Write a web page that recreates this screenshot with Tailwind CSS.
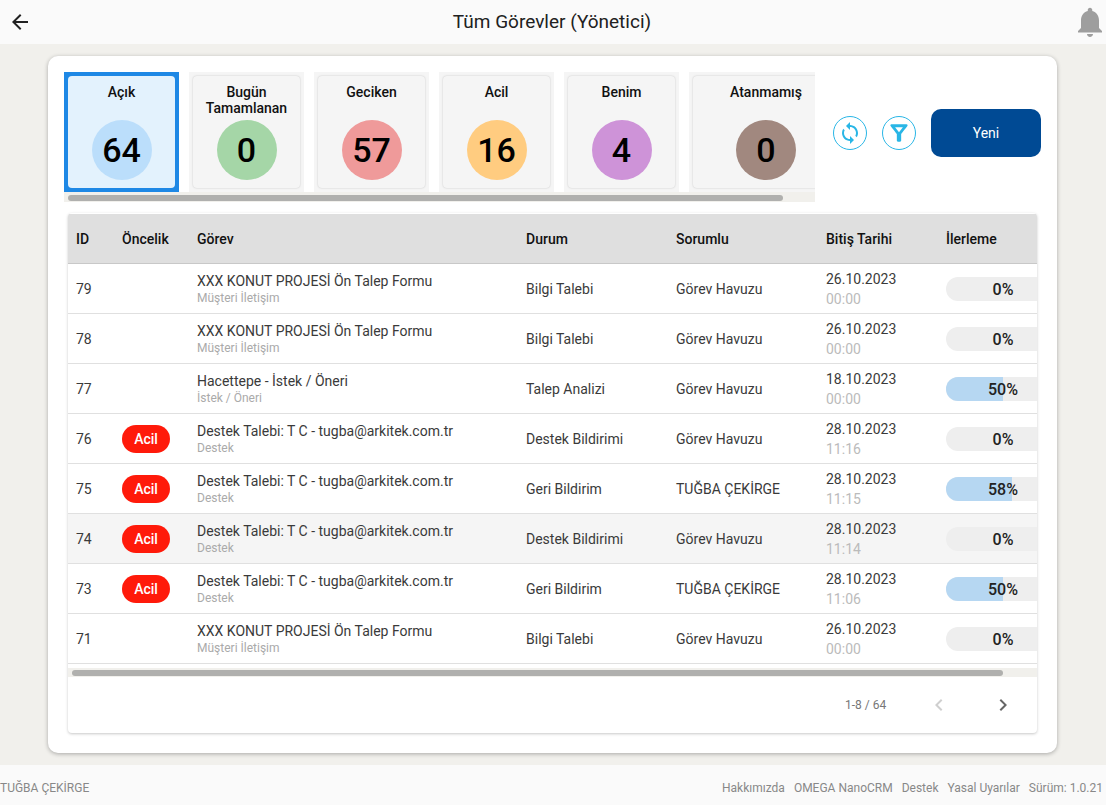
<!DOCTYPE html>
<html lang="en">

<head>
    <meta charset="UTF-8" />
    <meta name="viewport" content="width=device-width, initial-scale=1.0" />
    <title>Tüm Görevler (Yönetici)</title>
    <script src="https://cdn.jsdelivr.net/npm/@tailwindcss/browser@4"></script>
</head>

<body class="bg-[#f1f0ec] font-['Roboto',sans-serif] text-[#3a3a3a] h-[805px] w-[1106px] overflow-hidden flex flex-col">
    <!-- Top bar -->
    <header class="h-[44px] shrink-0 bg-[#fafafa] flex items-center justify-between pl-2 overflow-hidden relative">
        <svg class="w-6 h-6 fill-[#212121]" viewBox="0 0 24 24"><path d="M20 11H7.83l5.59-5.59L12 4l-8 8 8 8 1.41-1.41L7.83 13H20v-2z" /></svg>
        <h1 class="absolute inset-x-0 pr-[2px] text-center text-[19px] leading-[44px] text-[#212121]">Tüm Görevler (Yönetici)</h1>
        <svg class="w-9 h-9 fill-[#9e9e9e] -mr-[2px] shrink-0" viewBox="0 0 24 24"><path d="M12 22c1.1 0 2-.9 2-2h-4c0 1.1.89 2 2 2zm6-6v-5c0-3.07-1.64-5.64-4.5-6.32V4c0-.83-.67-1.5-1.5-1.5s-1.5.67-1.5 1.5v.68C7.63 5.36 6 7.92 6 11v5l-2 2v1h16v-1l-2-2z" /></svg>
    </header>

    <main class="flex-1 pt-3 pl-12">
        <div class="w-[1009px] h-[697px] bg-white rounded-[10px] shadow-[0_1px_4px_rgba(0,0,0,0.3)] pt-4 pl-4">
            <!-- Summary tiles -->
            <div class="flex items-start">
                <div class="w-[751px] overflow-hidden">
                    <div id="tiles" class="flex gap-[10px] h-[120px]"></div>
                    <div class="h-[10px] bg-[#f1f0ec] pt-[3px] pl-1 pr-8">
                        <div class="w-[715px] h-[6px] rounded-full bg-[#b0b0ae]"></div>
                    </div>
                </div>
                <div class="flex items-center mt-[37px] ml-[18px]">
                    <button class="w-[34px] h-[34px] rounded-full border border-[#29b6e6] flex items-center justify-center">
                        <svg class="w-6 h-6 fill-[#29b6e6]" viewBox="0 0 24 24"><path d="M12 4V1L8 5l4 4V6c3.31 0 6 2.69 6 6 0 1.01-.25 1.97-.7 2.8l1.46 1.46C19.54 15.03 20 13.57 20 12c0-4.42-3.58-8-8-8zm0 14c-3.31 0-6-2.69-6-6 0-1.01.25-1.97.7-2.8L5.24 7.74C4.46 8.97 4 10.43 4 12c0 4.42 3.58 8 8 8v3l4-4-4-4v3z" /></svg>
                    </button>
                    <button class="w-[34px] h-[34px] rounded-full border border-[#29b6e6] flex items-center justify-center ml-[15px]">
                        <svg class="w-[26px] h-[26px] fill-[#29b6e6]" viewBox="0 0 24 24"><path fill-rule="evenodd" d="M8.4 6.6h7.2L12 11.2zM4.25 5.61C6.27 8.2 10 13 10 13v6c0 .55.45 1 1 1h2c.55 0 1-.45 1-1v-6s3.72-4.8 5.74-7.39C20.25 4.95 19.78 4 18.95 4H5.04c-.83 0-1.3.95-.79 1.61z" /></svg>
                    </button>
                    <button class="w-[110px] h-[48px] rounded-[10px] bg-[#004a94] text-white text-sm ml-[15px]">Yeni</button>
                </div>
            </div>

            <!-- Task table -->
            <div class="w-[969px] h-[520px] mt-[11px] ml-1 bg-white rounded-[4px] shadow-[0_1px_3px_rgba(0,0,0,0.22)] overflow-hidden pt-px">
                <table class="table-fixed w-[1000px] border-collapse text-sm text-left">
                    <colgroup>
                        <col class="w-[46px]" /><col class="w-[75px]" /><col class="w-[329px]" /><col class="w-[150px]" /><col class="w-[150px]" /><col class="w-[120px]" /><col class="w-[130px]" />
                    </colgroup>
                    <thead>
                        <tr class="h-[49px] bg-[#dfdfdf] border-b border-[#c8c8c8] text-[#111]">
                            <th class="px-2 pt-px font-medium">ID</th>
                            <th class="px-2 pt-px font-medium">Öncelik</th>
                            <th class="px-2 pt-px font-medium">Görev</th>
                            <th class="px-2 pt-px font-medium">Durum</th>
                            <th class="px-2 pt-px font-medium">Sorumlu</th>
                            <th class="px-2 pt-px font-medium">Bitiş Tarihi</th>
                            <th class="px-2 pt-px font-medium">İlerleme</th>
                        </tr>
                    </thead>
                    <tbody id="rows"></tbody>
                </table>
                <div class="h-[9px] mt-1 bg-[#f1f0ec] pt-[2px] pl-1">
                    <div class="w-[931px] h-[6px] rounded-full bg-[#b0b0ae]"></div>
                </div>
                <!-- Pagination -->
                <div class="h-[56px] flex items-center text-xs text-[#777]">
                    <span class="ml-[777px] w-[41px] whitespace-nowrap">1-8 / 64</span>
                    <svg class="w-6 h-6 fill-[#cfcfcf] ml-[41px]" viewBox="0 0 24 24"><path d="M15.41 7.41L14 6l-6 6 6 6 1.41-1.41L10.83 12z" /></svg>
                    <svg class="w-6 h-6 fill-[#666] ml-[40px]" viewBox="0 0 24 24"><path d="M10 6L8.59 7.41 13.17 12l-4.58 4.59L10 18l6-6z" /></svg>
                </div>
            </div>
        </div>
    </main>

    <!-- Footer -->
    <footer class="h-[40px] shrink-0 mt-3 pt-[6px] bg-[#fafafa] flex items-center justify-between text-xs text-[#888] pr-[3px]">
        <span>TUĞBA ÇEKİRGE</span>
        <div class="flex gap-[9px]">
            <span>Hakkımızda</span>
            <span>OMEGA NanoCRM</span>
            <span>Destek</span>
            <span>Yasal Uyarılar</span>
            <span>Sürüm: 1.0.21</span>
        </div>
    </footer>

    <script>
        const tiles = [
            { label: "Açık", count: 64, circle: "bg-[#bbdefb]", active: true },
            { label: "Bugün Tamamlanan", count: 0, circle: "bg-[#a5d6a7]" },
            { label: "Geciken", count: 57, circle: "bg-[#ef9a9a]" },
            { label: "Acil", count: 16, circle: "bg-[#ffcc80]" },
            { label: "Benim", count: 4, circle: "bg-[#ce93d8]" },
            { label: "Atanmamış", count: 0, circle: "bg-[#a1887f]", wide: true },
        ];

        const rows = [
            [79, false, "XXX KONUT PROJESİ Ön Talep Formu", "Müşteri İletişim", "Bilgi Talebi", "Görev Havuzu", "26.10.2023", "00:00", 0],
            [78, false, "XXX KONUT PROJESİ Ön Talep Formu", "Müşteri İletişim", "Bilgi Talebi", "Görev Havuzu", "26.10.2023", "00:00", 0],
            [77, false, "Hacettepe - İstek / Öneri", "İstek / Öneri", "Talep Analizi", "Görev Havuzu", "18.10.2023", "00:00", 50],
            [76, true, "Destek Talebi: T C - tugba@arkitek.com.tr", "Destek", "Destek Bildirimi", "Görev Havuzu", "28.10.2023", "11:16", 0],
            [75, true, "Destek Talebi: T C - tugba@arkitek.com.tr", "Destek", "Geri Bildirim", "TUĞBA ÇEKİRGE", "28.10.2023", "11:15", 58],
            [74, true, "Destek Talebi: T C - tugba@arkitek.com.tr", "Destek", "Destek Bildirimi", "Görev Havuzu", "28.10.2023", "11:14", 0],
            [73, true, "Destek Talebi: T C - tugba@arkitek.com.tr", "Destek", "Geri Bildirim", "TUĞBA ÇEKİRGE", "28.10.2023", "11:06", 50],
            [71, false, "XXX KONUT PROJESİ Ön Talep Formu", "Müşteri İletişim", "Bilgi Talebi", "Görev Havuzu", "26.10.2023", "00:00", 0],
        ];

        document.getElementById("tiles").innerHTML = tiles.map(t => `
            <div class="${t.wide ? "w-[154px]" : "w-[115px]"} shrink-0 h-[120px] p-1 ${t.active ? "bg-[#1e88e5]" : "bg-[#f5f5f5]"}">
                <div class="h-[112px] rounded-[4px] pt-2 flex flex-col items-center ${t.active ? "bg-[#e3f2fd]" : "bg-[#f5f5f5] shadow-[0_0_2px_rgba(0,0,0,0.2)]"}">
                    <div class="h-9 text-sm leading-4 font-medium text-center text-[#111]">${t.label}</div>
                    <div class="w-[60px] h-[60px] rounded-full flex items-center justify-center text-[34px] font-medium text-black ${t.circle}">${t.count}</div>
                </div>
            </div>
        `).join("");

        document.getElementById("rows").innerHTML = rows.map(r => `
            <tr class="h-[50px] border-b border-[#e0e0e0] ${r[0] === 74 ? "bg-[#f5f5f5]" : ""}">
                <td class="px-2 pt-[2px]">${r[0]}</td>
                <td class="px-2 pt-[2px]">${r[1] ? '<span class="flex w-12 h-7 items-center justify-center rounded-full bg-[#ff1a0a] text-white font-medium">Acil</span>' : ""}</td>
                <td class="px-2 pt-[2px]">
                    <div class="leading-4 mb-[2px]">${r[2]}</div>
                    <div class="text-xs leading-[14px] text-[#aaa]">${r[3]}</div>
                </td>
                <td class="px-2 pt-[2px]">${r[4]}</td>
                <td class="px-2 pt-[2px]">${r[5]}</td>
                <td class="px-2 pt-[2px] leading-5">
                    <div>${r[6]}</div>
                    <div class="text-[#bbb]">${r[7]}</div>
                </td>
                <td class="px-2 pt-[2px]">
                    <div class="relative w-[114px] h-6 rounded-full overflow-hidden bg-[#eeeeee] flex items-center justify-center">
                        <div class="absolute inset-y-0 left-0 bg-[#b6d7f2]" style="width: ${r[8]}%"></div>
                        <span class="relative pt-px text-base font-medium text-[#222]">${r[8]}%</span>
                    </div>
                </td>
            </tr>
        `).join("");
    </script>
</body>

</html>
